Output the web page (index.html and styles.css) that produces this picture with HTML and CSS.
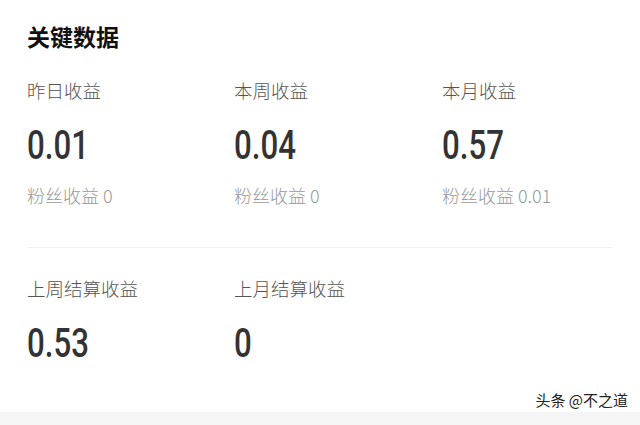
FILE: index.html
```html
<!DOCTYPE html>
<html lang="zh">
<head>
<meta charset="utf-8">
<title>关键数据</title>
<link rel="stylesheet" href="styles.css">
</head>
<body>
<div class="page">
  <section class="card">
    <h1 class="title">关键数据</h1>
    <div class="grid row-one">
      <div class="stat">
        <div class="label">昨日收益</div>
        <div class="value"><span class="num">0.01</span></div>
        <div class="sub">粉丝收益 0</div>
      </div>
      <div class="stat">
        <div class="label">本周收益</div>
        <div class="value"><span class="num">0.04</span></div>
        <div class="sub">粉丝收益 0</div>
      </div>
      <div class="stat">
        <div class="label">本月收益</div>
        <div class="value"><span class="num">0.57</span></div>
        <div class="sub">粉丝收益 0.01</div>
      </div>
    </div>
    <div class="divider"></div>
    <div class="grid row-two">
      <div class="stat">
        <div class="label">上周结算收益</div>
        <div class="value"><span class="num">0.53</span></div>
      </div>
      <div class="stat">
        <div class="label">上月结算收益</div>
        <div class="value"><span class="num">0</span></div>
      </div>
    </div>
  </section>
  <div class="strip"></div>
  <div class="watermark">头条 @不之道</div>
</div>
</body>
</html>
```

FILE: styles.css
```css
html, body {
  margin: 0;
  padding: 0;
  background: #ffffff;
}

body {
  width: 640px;
  height: 425px;
  overflow: hidden;
  font-family: "Noto Sans CJK SC", "Noto Sans", sans-serif;
}

.page {
  position: relative;
  height: 425px;
  display: flex;
  flex-direction: column;
}

.card {
  flex: 1;
  padding: 21px 27px 0 27px;
  background: #ffffff;
}

.title {
  margin: 0;
  font-size: 23px;
  line-height: 30px;
  font-weight: 700;
  color: #111111;
}

.grid {
  display: grid;
  grid-template-columns: 207px 208px 1fr;
}

.row-one {
  margin-top: 27px;
}

.row-two {
  margin-top: 28px;
}

.label {
  font-size: 18.5px;
  line-height: 24px;
  font-weight: 300;
  color: #555555;
}

.value {
  margin-top: 24px;
  height: 40px;
  line-height: 40px;
  white-space: nowrap;
}

.num {
  display: inline-block;
  font-family: Roboto, "Liberation Sans", sans-serif;
  font-size: 40px;
  font-weight: 500;
  color: #333333;
  transform: scaleX(0.78);
  transform-origin: left center;
}

.sub {
  margin-top: 17px;
  font-size: 18px;
  line-height: 24px;
  font-weight: 300;
  color: #999999;
}

.divider {
  margin-top: 40px;
  height: 1px;
  background: #f0f0f0;
}

.strip {
  height: 13px;
  background: #f5f5f5;
}

.watermark {
  position: absolute;
  right: 12px;
  bottom: 15px;
  font-size: 15px;
  line-height: 20px;
  color: #222222;
  text-shadow: 0 0 2px #ffffff;
}
```
